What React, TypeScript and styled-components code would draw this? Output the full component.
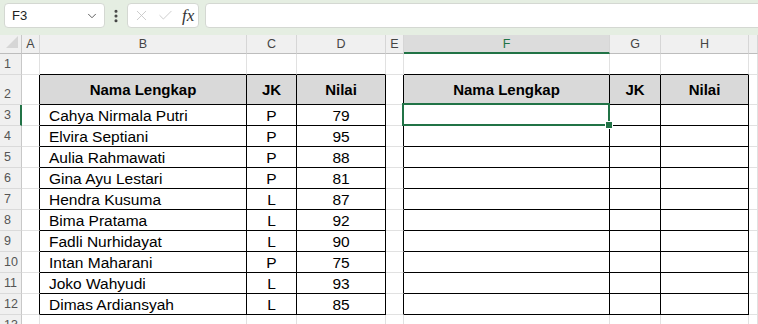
import React from "react";
import styled, { createGlobalStyle } from "styled-components";
import { ChevronDown, EllipsisVertical, X, Check } from "lucide-react";

const GlobalStyle = createGlobalStyle`
    html, body {
        margin: 0;
        padding: 0;
        background: #ffffff;
        overflow: hidden;
        font-family: "Liberation Sans", Arial, sans-serif;
    }
`;

const COLS = ["A", "B", "C", "D", "E", "F", "G", "H", "I"];
const WIDTHS = [18, 207, 50, 89, 18, 206, 51, 88];
const ROW_HEIGHTS = [21, 30, 21, 21, 21, 21, 21, 21, 21, 21, 21, 21, 21];

const data: [string, string, string][] = [
    ["Cahya Nirmala Putri", "P", "79"],
    ["Elvira Septiani", "P", "95"],
    ["Aulia Rahmawati", "P", "88"],
    ["Gina Ayu Lestari", "P", "81"],
    ["Hendra Kusuma", "L", "87"],
    ["Bima Pratama", "L", "92"],
    ["Fadli Nurhidayat", "L", "90"],
    ["Intan Maharani", "P", "75"],
    ["Joko Wahyudi", "L", "93"],
    ["Dimas Ardiansyah", "L", "85"],
];

const GREEN = "#217346";
const GRID_LINE = "#e1e1e1";

// row 2..12, cols B-D (1..3) and F-H (5..7)
const inTable = (r: number, c: number) =>
    r >= 2 && r <= 12 && ((c >= 1 && c <= 3) || (c >= 5 && c <= 7));

const cellText = (r: number, c: number): string => {
    if (r === 2) {
        if (c === 1 || c === 5) return "Nama Lengkap";
        if (c === 2 || c === 6) return "JK";
        if (c === 3 || c === 7) return "Nilai";
    }
    if (r >= 3 && r <= 12 && c >= 1 && c <= 3) return data[r - 3][c - 1];
    return "";
};

export default function App() {
    const cells: React.ReactNode[] = [];

    ROW_HEIGHTS.forEach((_, i) => {
        const r = i + 1;
        cells.push(
            <RowHeader key={`rh${r}`} $active={r === 3}>
                {r}
            </RowHeader>
        );
        COLS.forEach((_, c) => {
            const table = inTable(r, c);
            const right = table || inTable(r, c + 1);
            const bottom = table || inTable(r + 1, c);
            const isHead = r === 2 && table;
            const align = c === 1 && r > 2 ? "left" : "center";
            const selected = r === 3 && c === 5;
            cells.push(
                <Cell
                    key={`c${r}-${c}`}
                    $right={right ? "#000" : GRID_LINE}
                    $bottom={bottom ? "#000" : GRID_LINE}
                    $head={isHead}
                    $align={align}
                >
                    {cellText(r, c)}
                    {selected && (
                        <Selection>
                            <Handle />
                        </Selection>
                    )}
                </Cell>
            );
        });
    });

    return (
        <Page>
            <GlobalStyle />
            <Toolbar>
                <NameBox>
                    <span>F3</span>
                    <ChevronDown size={14} strokeWidth={1.6} color="#555" />
                </NameBox>
                <Dots>
                    <EllipsisVertical size={16} strokeWidth={2.6} color="#444" />
                </Dots>
                <FxBox>
                    <X size={17} strokeWidth={1.2} color="#c4c4c4" />
                    <Check size={17} strokeWidth={1.2} color="#c4c4c4" />
                    <Fx>fx</Fx>
                </FxBox>
                <FormulaInput />
            </Toolbar>
            <Grid>
                <Corner>
                    <svg width="12" height="12" viewBox="0 0 12 12">
                        <polygon points="12,0 12,12 0,12" fill="#d6d6d6" />
                    </svg>
                </Corner>
                {COLS.map((col) => (
                    <ColHeader key={col} $active={col === "F"}>
                        {col === "I" ? "" : col}
                    </ColHeader>
                ))}
                {cells}
            </Grid>
        </Page>
    );
}

const Page = styled.div`
    width: 758px;
    height: 324px;
    overflow: hidden;
    display: flex;
    flex-direction: column;
`;

const Toolbar = styled.div`
    flex-shrink: 0;
    height: 35px;
    box-sizing: border-box;
    background: #e5eee2;
    display: flex;
    align-items: flex-start;
    padding: 3px 0 0 4px;
`;

const NameBox = styled.div`
    width: 101px;
    height: 25px;
    box-sizing: border-box;
    background: #fff;
    border: 1px solid #d4d8d2;
    border-radius: 4px;
    display: flex;
    align-items: center;
    justify-content: space-between;
    padding: 0 5px 0 7px;
    font-size: 13px;
    color: #222;
`;

const Dots = styled.div`
    width: 22px;
    height: 25px;
    display: flex;
    align-items: center;
    justify-content: center;
`;

const FxBox = styled.div`
    width: 72px;
    height: 25px;
    box-sizing: border-box;
    background: #fff;
    border: 1px solid #d4d8d2;
    border-radius: 4px;
    display: flex;
    align-items: center;
    gap: 7px;
    padding: 0 0 0 5px;
`;

const Fx = styled.span`
    font-family: "Liberation Serif", "Times New Roman", serif;
    font-style: italic;
    font-size: 17px;
    color: #333;
    margin-left: 1px;
`;

const FormulaInput = styled.div`
    flex: 1;
    height: 25px;
    margin-left: 6px;
    margin-right: -10px;
    box-sizing: border-box;
    background: #fff;
    border: 1px solid #d4d8d2;
    border-radius: 4px;
`;

const Grid = styled.div`
    flex-shrink: 0;
    display: grid;
    grid-template-columns: 22px ${WIDTHS.map((w) => `${w}px`).join(" ")} 1fr;
    grid-template-rows: 19px ${ROW_HEIGHTS.map((h) => `${h}px`).join(" ")};
`;

const Corner = styled.div`
    background: #f0f0f0;
    border-right: 1px solid #c8c8c8;
    border-bottom: 1px solid #bdbdbd;
    box-sizing: border-box;
    display: flex;
    align-items: flex-end;
    justify-content: flex-end;
    padding: 0 3px 5px 0;
`;

const ColHeader = styled.div<{ $active?: boolean }>`
    box-sizing: border-box;
    background: ${(p) => (p.$active ? "#dcdcdc" : "#f0f0f0")};
    border-right: 1px solid #d6d6d6;
    border-bottom: ${(p) => (p.$active ? `2px solid ${GREEN}` : "1px solid #bdbdbd")};
    color: ${(p) => (p.$active ? GREEN : "#444")};
    font-size: 12.5px;
    display: flex;
    align-items: center;
    justify-content: center;
    padding-top: ${(p) => (p.$active ? "1px" : "0")};
`;

const RowHeader = styled.div<{ $active?: boolean }>`
    box-sizing: border-box;
    background: #f0f0f0;
    border-right: ${(p) => (p.$active ? `2px solid ${GREEN}` : "1px solid #c8c8c8")};
    border-bottom: 1px solid #dadada;
    color: #555;
    font-size: 12.5px;
    display: flex;
    align-items: flex-end;
    padding: 0 0 3px 4px;
`;

const Cell = styled.div<{ $right: string; $bottom: string; $head?: boolean; $align: "left" | "center" }>`
    position: relative;
    box-sizing: border-box;
    border-right: 1px solid ${(p) => p.$right};
    border-bottom: 1px solid ${(p) => p.$bottom};
    background: ${(p) => (p.$head ? "#d9d9d9" : "#fff")};
    font-size: ${(p) => (p.$head ? "15px" : "15.5px")};
    font-weight: ${(p) => (p.$head ? 700 : 400)};
    color: #000;
    display: flex;
    align-items: ${(p) => (p.$head ? "center" : "flex-end")};
    justify-content: ${(p) => (p.$align === "left" ? "flex-start" : "center")};
    padding: 0 ${(p) => (p.$align === "left" ? "9px" : "0")};
    white-space: nowrap;
`;

const Selection = styled.div`
    position: absolute;
    left: -2px;
    top: -2px;
    right: -1px;
    bottom: -1px;
    border: 2px solid ${GREEN};
    pointer-events: none;
    z-index: 1;
`;

const Handle = styled.div`
    position: absolute;
    right: -5px;
    bottom: -5px;
    width: 6px;
    height: 6px;
    background: ${GREEN};
    border: 1px solid #fff;
`;
